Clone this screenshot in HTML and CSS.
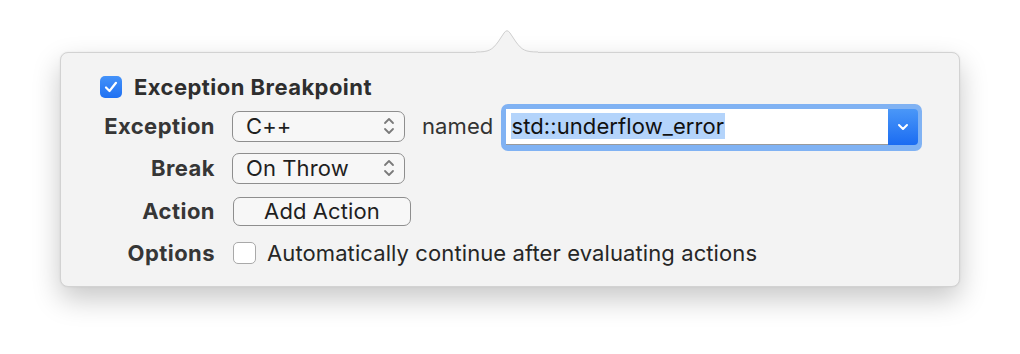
FILE: index.html
```html
<!DOCTYPE html>
<html>
<head>
<meta charset="utf-8">
<link rel="stylesheet" href="styles.css">
</head>
<body>
<div class="stage">
  <div class="popover">
    <svg class="arrow" width="62" height="27" viewBox="0 0 62 27">
      <path class="arrow-fill" d="M0 25 C13 25 16 23 22 15 L28 6 Q31 1.5 34 6 L40 15 C46 23 49 25 62 25 L62 27 L0 27 Z"/>
      <path class="arrow-line" d="M0 25 C13 25 16 23 22 15 L28 6 Q31 1.5 34 6 L40 15 C46 23 49 25 62 25"/>
    </svg>
    <div class="title-row">
      <span class="check on">
        <svg width="14" height="12" viewBox="0 0 14 12"><path d="M2 6.5 L5.5 10 L12 1.8" fill="none" stroke="#fff" stroke-width="2.2" stroke-linecap="round" stroke-linejoin="round"/></svg>
      </span>
      <span class="title">Exception Breakpoint</span>
    </div>
    <div class="form">
      <div class="lbl">Exception</div>
      <div class="ctrl">
        <div class="popup">
          <span>C++</span>
          <svg class="updown" width="12" height="20" viewBox="0 0 12 20"><path d="M2 7 L6 3 L10 7 M2 13 L6 17 L10 13" fill="none" stroke="#7a7a7a" stroke-width="1.8" stroke-linecap="round" stroke-linejoin="round"/></svg>
        </div>
        <span class="named">named</span>
        <div class="combo-ring">
          <div class="combo">
            <div class="combo-field"><span class="sel">std::underflow_error</span></div>
            <div class="combo-btn">
              <svg width="12" height="8" viewBox="0 0 12 8"><path d="M2 2 L6 6 L10 2" fill="none" stroke="#fff" stroke-width="2" stroke-linecap="round" stroke-linejoin="round"/></svg>
            </div>
          </div>
        </div>
      </div>

      <div class="lbl">Break</div>
      <div class="ctrl">
        <div class="popup">
          <span>On Throw</span>
          <svg class="updown" width="12" height="20" viewBox="0 0 12 20"><path d="M2 7 L6 3 L10 7 M2 13 L6 17 L10 13" fill="none" stroke="#7a7a7a" stroke-width="1.8" stroke-linecap="round" stroke-linejoin="round"/></svg>
        </div>
      </div>

      <div class="lbl">Action</div>
      <div class="ctrl">
        <div class="button">Add Action</div>
      </div>

      <div class="lbl">Options</div>
      <div class="ctrl">
        <span class="check off"></span>
        <span class="opt-text">Automatically continue after evaluating actions</span>
      </div>
    </div>
  </div>
</div>
</body>
</html>
```

FILE: styles.css
```css
html, body {
  margin: 0;
  padding: 0;
  background: #ffffff;
}
body {
  font-family: "Inter", "Liberation Sans", sans-serif;
  font-size: 22px;
  letter-spacing: 0.1px;
  color: #262626;
  width: 1020px;
  height: 354px;
  overflow: hidden;
}
.stage {
  padding: 52px 0 0 60px;
}
.popover {
  position: relative;
  width: 898px;
  height: 233px;
  background: #f3f3f3;
  border: 1px solid #d2d2d2;
  border-radius: 8px;
  box-shadow: 0 12px 28px rgba(0, 0, 0, 0.22), 0 0 2px rgba(0, 0, 0, 0.08);
}
.arrow {
  position: absolute;
  left: 415px;
  top: -26px;
  display: block;
}
.arrow-fill {
  fill: #f3f3f3;
}
.arrow-line {
  fill: none;
  stroke: #cfcfcf;
  stroke-width: 1;
}
.title-row {
  display: flex;
  align-items: center;
  gap: 12px;
  margin: 23px 0 0 39px;
  height: 22px;
}
.check {
  display: inline-flex;
  align-items: center;
  justify-content: center;
  box-sizing: border-box;
  width: 22px;
  height: 22px;
  border-radius: 5px;
  flex: none;
}
.check.on {
  background: linear-gradient(#4492f9, #1f70f2);
}
.check.off {
  background: #ffffff;
  border: 1px solid #a9a9a9;
  width: 23px;
}
.title {
  font-weight: 700;
  letter-spacing: 0.45px;
  color: #2e2e2e;
}
.form {
  display: grid;
  grid-template-columns: 154px 1fr;
  grid-template-rows: 42px 42px 44px 40px;
  column-gap: 17px;
  margin-top: 7px;
}
.lbl {
  display: flex;
  align-items: center;
  justify-content: flex-end;
  font-weight: 700;
  letter-spacing: 0.45px;
  color: #363636;
}
.ctrl {
  display: flex;
  align-items: center;
}
.popup {
  box-sizing: border-box;
  width: 173px;
  height: 31px;
  border: 1.5px solid #8e8e8e;
  border-radius: 7px;
  background: #f7f7f7;
  display: flex;
  align-items: center;
  justify-content: space-between;
  padding: 0 9px 0 13px;
  color: #1f1f1f;
}
.updown {
  display: block;
}
.named {
  margin-left: 17px;
  color: #333333;
}
.combo-ring {
  margin-left: 8px;
  padding: 5px 4px 6px 5px;
  margin-top: 2px;
  background: #80b2f3;
  border-radius: 7px;
}
.combo {
  display: flex;
  width: 412px;
  height: 36px;
}
.combo-field {
  flex: 1;
  background: #ffffff;
  border-bottom: 1px solid #9a9a9a;
  display: flex;
  align-items: center;
  padding-left: 5px;
}
.sel {
  background: #b4d4fb;
  color: #111111;
  line-height: 26px;
  padding-right: 1px;
}
.combo-btn {
  width: 30px;
  background: linear-gradient(#4a97f8, #1b6cf2);
  border-radius: 0 4px 4px 0;
  display: flex;
  align-items: center;
  justify-content: center;
}
.button {
  box-sizing: border-box;
  width: 178px;
  height: 29px;
  margin-left: 1px;
  border: 1.5px solid #8e8e8e;
  border-radius: 7px;
  background: #f7f7f7;
  display: flex;
  align-items: center;
  justify-content: center;
  color: #1f1f1f;
}
.check.off + .opt-text {
  margin-left: 11px;
}
.ctrl .check.off {
  margin-left: 1px;
}
.opt-text {
  color: #262626;
}
```
